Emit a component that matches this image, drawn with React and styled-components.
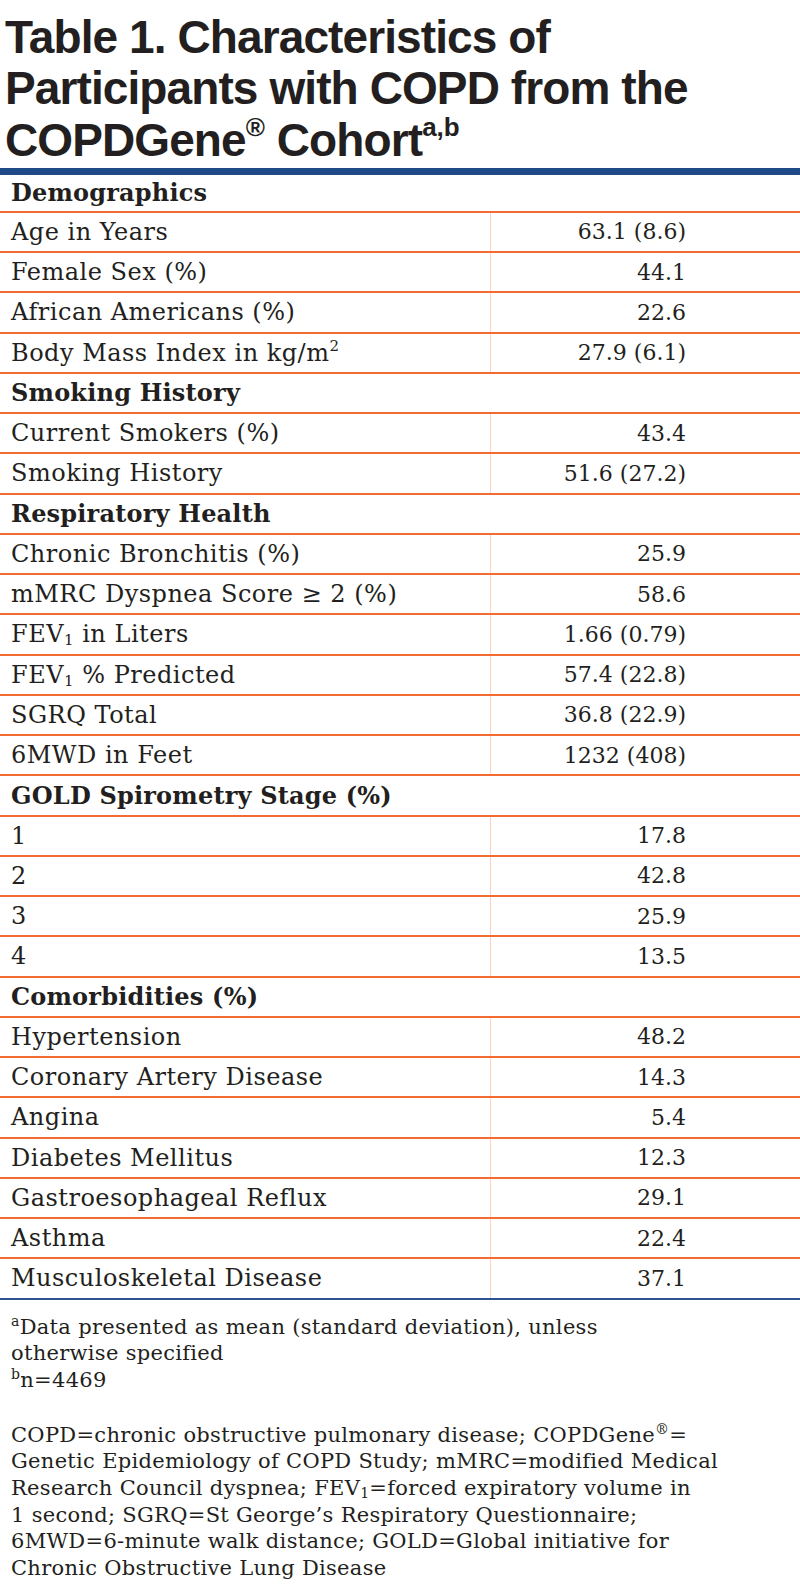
import React from 'react';
import styled, { createGlobalStyle } from 'styled-components';

const Global = createGlobalStyle`
  html, body {
    margin: 0;
    padding: 0;
    background: #ffffff;
  }
  body {
    font-family: "DejaVu Serif", "Liberation Serif", serif;
    color: #231f20;
  }
`;

const Page = styled.div`
  width: 800px;
  background: #fff;
`;

const Title = styled.h1`
  margin: 0;
  padding: 11.5px 0 2px 5px;
  font-family: "Liberation Sans", Arial, sans-serif;
  font-weight: 700;
  font-size: 46px;
  line-height: 51.5px;
  letter-spacing: -0.9px;
  color: #231f20;
  sup {
    font-size: 26px;
    line-height: 0;
    vertical-align: 20px;
    letter-spacing: 0;
  }
`;

const Table = styled.table`
  width: 100%;
  border-collapse: collapse;
  border-top: 7px solid #1f4a87;
  border-bottom: 2px solid #2b5390;
`;

const Row = styled.tr`
  height: 40.25px;
  border-bottom: 2px solid ${p => (p.$last ? '#2b5390' : '#f26b32')};
`;

const Label = styled.td`
  width: 479px;
  padding: 0 0 0 11px;
  border-right: ${p => (p.$section ? 'none' : '1.5px solid #fbd2bd')};
  font-size: 24px;
  font-weight: ${p => (p.$section ? 700 : 400)};
  letter-spacing: ${p => (p.$section ? '0.2px' : '0.5px')};
  white-space: nowrap;
  vertical-align: middle;
  sup {
    font-size: 15px;
    line-height: 0;
    vertical-align: 10px;
  }
  sub {
    font-size: 15px;
    line-height: 0;
    vertical-align: -3px;
  }
`;

const Value = styled.td`
  padding: 0 114px 0 0;
  font-size: 22px;
  text-align: right;
  white-space: nowrap;
  vertical-align: middle;
`;

const Notes = styled.div`
  padding: 14px 0 0 11px;
  font-size: 21px;
  line-height: 26.6px;
  letter-spacing: 0.3px;
  color: #231f20;
  sup {
    font-size: 14px;
    line-height: 0;
    vertical-align: 8px;
  }
  sub {
    font-size: 14px;
    line-height: 0;
    vertical-align: -3px;
  }
`;

const NotePara = styled.p`
  margin: ${p => (p.$spaced ? '2px 0 0' : '0')};
`;

const FEV = () => (
  <>
    FEV<sub>1</sub>
  </>
);

const sections = [
  {
    title: 'Demographics',
    rows: [
      ['Age in Years', '63.1 (8.6)'],
      ['Female Sex (%)', '44.1'],
      ['African Americans (%)', '22.6'],
      [<>Body Mass Index in kg/m<sup>2</sup></>, '27.9 (6.1)'],
    ],
  },
  {
    title: 'Smoking History',
    rows: [
      ['Current Smokers (%)', '43.4'],
      ['Smoking History', '51.6 (27.2)'],
    ],
  },
  {
    title: 'Respiratory Health',
    rows: [
      ['Chronic Bronchitis (%)', '25.9'],
      ['mMRC Dyspnea Score \u2265 2 (%)', '58.6'],
      [<><FEV /> in Liters</>, '1.66 (0.79)'],
      [<><FEV /> % Predicted</>, '57.4 (22.8)'],
      ['SGRQ Total', '36.8 (22.9)'],
      ['6MWD in Feet', '1232 (408)'],
    ],
  },
  {
    title: 'GOLD Spirometry Stage (%)',
    rows: [
      ['1', '17.8'],
      ['2', '42.8'],
      ['3', '25.9'],
      ['4', '13.5'],
    ],
  },
  {
    title: 'Comorbidities (%)',
    rows: [
      ['Hypertension', '48.2'],
      ['Coronary Artery Disease', '14.3'],
      ['Angina', '5.4'],
      ['Diabetes Mellitus', '12.3'],
      ['Gastroesophageal Reflux', '29.1'],
      ['Asthma', '22.4'],
      ['Musculoskeletal Disease', '37.1'],
    ],
  },
];

export default function App() {
  return (
    <Page>
      <Global />
      <Title>
        Table 1. Characteristics of
        <br />
        Participants with COPD from the
        <br />
        COPDGene<sup>®</sup> Cohort<sup>a,b</sup>
      </Title>
      <Table>
        <tbody>
          {sections.map((s, si) => (
            <React.Fragment key={s.title}>
              <Row>
                <Label $section colSpan={2}>{s.title}</Label>
              </Row>
              {s.rows.map((r, ri) => (
                <Row key={ri} $last={si === sections.length - 1 && ri === s.rows.length - 1}>
                  <Label>{r[0]}</Label>
                  <Value>{r[1]}</Value>
                </Row>
              ))}
            </React.Fragment>
          ))}
        </tbody>
      </Table>
      <Notes>
        <NotePara>
          <sup>a</sup>Data presented as mean (standard deviation), unless
          <br />
          otherwise specified
          <br />
          <sup>b</sup>n=4469
        </NotePara>
        <NotePara>&nbsp;</NotePara>
        <NotePara $spaced>
          COPD=chronic obstructive pulmonary disease; COPDGene<sup>®</sup>=
          <br />
          Genetic Epidemiology of COPD Study; mMRC=modified Medical
          <br />
          Research Council dyspnea; <FEV />=forced expiratory volume in
          <br />
          1 second; SGRQ=St George’s Respiratory Questionnaire;
          <br />
          6MWD=6-minute walk distance; GOLD=Global initiative for
          <br />
          Chronic Obstructive Lung Disease
        </NotePara>
      </Notes>
    </Page>
  );
}
